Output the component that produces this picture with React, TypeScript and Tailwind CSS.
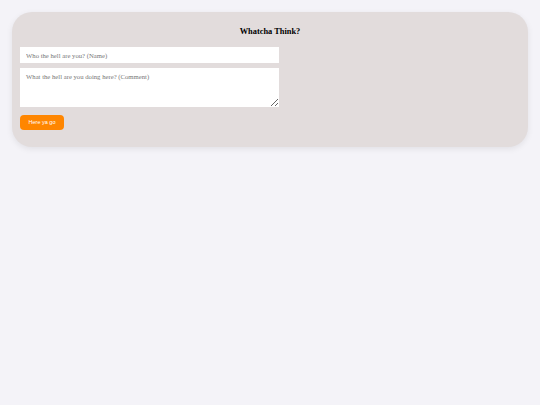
export default function App() {
  return (
    <div className="min-h-[405px] w-full bg-[#f4f3f8] pt-[12px] px-[12px]" style={{ fontFamily: '"Liberation Serif", serif' }}>
      <div className="rounded-[20px] bg-[#e2dcdc] shadow-[0_2px_6px_rgba(0,0,0,0.08)] px-[8px] pt-[14px] pb-[16px]">
        <h2 className="text-center text-[8.4px] font-bold text-black leading-[12px] mb-[9px]">Whatcha Think?</h2>
        <input
          className="block w-[259px] h-[16px] bg-white px-[6px] text-[6.7px] text-black placeholder:text-[#777] outline-none"
          placeholder="Who the hell are you? (Name)"
        />
        <textarea
          className="block mt-[5px] w-[259px] h-[39px] bg-white px-[6px] pt-[5px] text-[6.7px] leading-[8px] text-black placeholder:text-[#777] outline-none resize-y"
          placeholder="What the hell are you doing here? (Comment)"
        />
        <button
          className="mt-[8px] w-[44px] h-[15px] rounded-[4px] bg-[#ff8600] text-white text-[5.5px] leading-none"
          style={{ fontFamily: '"Liberation Sans", Arial, sans-serif' }}
        >
          Here ya go
        </button>
      </div>
    </div>
  );
}
